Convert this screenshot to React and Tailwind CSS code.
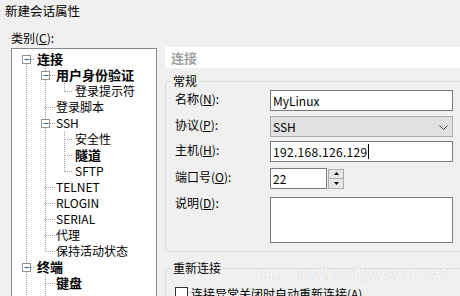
import React from 'react';

const FONT = "font-['Noto_Sans_CJK_SC','Noto_Sans',sans-serif]";

const TREE = [
  { t: '连接', lv: 0, b: true },
  { t: '用户身份验证', lv: 1, b: true },
  { t: '登录提示符', lv: 2 },
  { t: '登录脚本', lv: 1 },
  { t: 'SSH', lv: 1 },
  { t: '安全性', lv: 2 },
  { t: '隧道', lv: 2, b: true },
  { t: 'SFTP', lv: 2 },
  { t: 'TELNET', lv: 1 },
  { t: 'RLOGIN', lv: 1 },
  { t: 'SERIAL', lv: 1 },
  { t: '代理', lv: 1 },
  { t: '保持活动状态', lv: 1 },
  { t: '终端', lv: 0, b: true },
  { t: '键盘', lv: 1, b: true },
];
const PAD = ['pl-[25px]', 'pl-[44px]', 'pl-[63px]'];

// row centre inside the tree box, in svg units
const cy = (i) => 10.5 + 16 * i;

function Minus({ x, i }) {
  return (
    <g>
      <rect x={x} y={cy(i) - 4} width="8" height="8" fill="#fff" stroke="#919191" />
      <line x1={x + 2} x2={x + 7} y1={cy(i)} y2={cy(i)} stroke="#3f5f8f" />
    </g>
  );
}

function TreeLines() {
  const dot = { stroke: '#a0a0a0', strokeDasharray: '1 1', shapeRendering: 'crispEdges' };
  const h = (i, x1, x2) => <line key={`h${i}${x1}`} x1={x1} x2={x2} y1={cy(i)} y2={cy(i)} {...dot} />;
  return (
    <svg className="absolute left-0 top-0 pointer-events-none" width="144" height="260">
      <line x1="14.5" x2="14.5" y1="15" y2="260" {...dot} />
      <line x1="33.5" x2="33.5" y1="17" y2="203" {...dot} />
      <line x1="52.5" x2="52.5" y1="34" y2="43" {...dot} />
      <line x1="52.5" x2="52.5" y1="82" y2="123" {...dot} />
      <line x1="33.5" x2="33.5" y1="226" y2="260" {...dot} />
      {h(0, 19, 23)}
      {h(13, 19, 23)}
      {h(1, 38, 43)}
      {h(4, 38, 43)}
      {[3, 8, 9, 10, 11, 12, 14].map((i) => h(i, 34, 43))}
      {[2, 5, 6, 7].map((i) => h(i, 53, 61))}
      <Minus x={10.5} i={0} />
      <Minus x={10.5} i={13} />
      <Minus x={29.5} i={1} />
      <Minus x={29.5} i={4} />
    </svg>
  );
}

function Label({ children, k }) {
  return (
    <div className="w-[95px] shrink-0 text-[12px] leading-[14px] mb-[4px]">
      {children}(<u>{k}</u>):
    </div>
  );
}

const boxCls = 'h-[21px] border border-[#7a7a7a] bg-white px-[2px] text-[12px] leading-[19px] flex items-center';

export default function App() {
  return (
    <div className={`relative w-[460px] h-[296px] overflow-hidden bg-[#f0f0f0] text-black ${FONT}`}>
      <div className="h-[26px] pl-[5px] pt-[3px] text-[12.5px] leading-[16px]">新建会话属性</div>
      <div className="flex">
        <div className="w-[157px] shrink-0 pl-[11px]">
          <div className="h-[22px] pt-[5px] text-[12px] leading-[14px]">类别(<u>C</u>):</div>
          <div className="relative h-[260px] border border-[#828790] bg-white pt-[2px]">
            <TreeLines />
            {TREE.map((r) => (
              <div
                key={r.t}
                className={`relative h-[16px] leading-[16px] whitespace-nowrap ${PAD[r.lv]} ${r.b ? 'text-[13px] font-bold' : 'text-[12px]'}`}
              >
                {r.t}
              </div>
            ))}
          </div>
        </div>

        <div className="ml-[8px] w-[300px] shrink-0">
          <div className="mt-[21px] h-[21px] bg-white pl-[6px] text-[13px] font-bold leading-[21px] text-[#a0a0a0]">连接</div>

          <div className="relative mt-[13px] h-[171px] rounded-[3px] border border-[#dcdcdc] pl-[9px] pt-[8px]">
            <div className="absolute left-[5px] top-[-8px] bg-[#f0f0f0] px-[2px] text-[12px] leading-[14px]">常规</div>
            <div className="flex items-center">
              <Label k="N">名称</Label>
              <div className={`${boxCls} w-[183px]`}>MyLinux</div>
            </div>
            <div className="mt-[5px] flex items-center">
              <Label k="P">协议</Label>
              <div className="flex h-[21px] w-[183px] items-center justify-between border border-[#adadad] bg-[#e1e1e1] pl-[2px] pr-[4px] text-[12px]">
                <span>SSH</span>
                <svg width="9" height="5" className="mt-[1px]">
                  <polyline points="0.5,0.5 4.5,4.5 8.5,0.5" fill="none" stroke="#444" />
                </svg>
              </div>
            </div>
            <div className="mt-[4px] flex items-center">
              <Label k="H">主机</Label>
              <div className={`${boxCls} w-[183px] tracking-[0.3px]`}>
                192.168.126.129
                <span className="ml-[1px] inline-block h-[15px] w-px bg-black" />
              </div>
            </div>
            <div className="mt-[6px] flex items-center">
              <Label k="O">端口号</Label>
              <div className={`${boxCls} w-[57px]`}>22</div>
              <div className="ml-[1px] flex h-[20px] w-[16px] flex-col">
                <div className="flex h-[10px] items-center justify-center border border-[#acacac] bg-[#e6e6e6]">
                  <svg width="5" height="3"><polygon points="2.5,0 5,3 0,3" fill="#000" /></svg>
                </div>
                <div className="flex h-[10px] items-center justify-center border border-t-0 border-[#acacac] bg-[#e6e6e6]">
                  <svg width="5" height="3"><polygon points="0,0 5,0 2.5,3" fill="#000" /></svg>
                </div>
              </div>
            </div>
            <div className="mt-[8px] flex items-start">
              <div className="w-[95px] shrink-0 text-[12px] leading-[12px]">说明(<u>D</u>):</div>
              <div className="h-[46px] w-[183px] border border-[#7a7a7a] bg-white" />
            </div>
          </div>

          <div className="relative mt-[16px] h-[60px] rounded-[3px] border border-[#dcdcdc] pl-[9px] pt-[18px]">
            <div className="absolute left-[5px] top-[-8px] bg-[#f0f0f0] px-[2px] text-[12px] leading-[14px]">重新连接</div>
            <div className="flex items-start">
              <div className="h-[13px] w-[13px] border border-[#333] bg-white" />
              <div className="ml-[3px] whitespace-nowrap text-[12px] leading-[13px]">连接异常关闭时自动重新连接(<u>A</u>)</div>
            </div>
          </div>
        </div>
      </div>

      <div className="pointer-events-none absolute left-[312px] top-[264px] whitespace-nowrap font-['Liberation_Sans',sans-serif] text-[15px] leading-[15px] text-[#fbfbfb] [text-shadow:0_0_1px_#c4c4c4]">
        https://blog.csdn.net/
      </div>
      <div className="pointer-events-none absolute left-[257px] top-[269px] whitespace-nowrap font-['Liberation_Sans',sans-serif] text-[15px] leading-[15px] text-[#fbfbfb] [text-shadow:0_0_1px_#c4c4c4]">
        https://blog.csdn.net/echerm
      </div>
    </div>
  );
}
